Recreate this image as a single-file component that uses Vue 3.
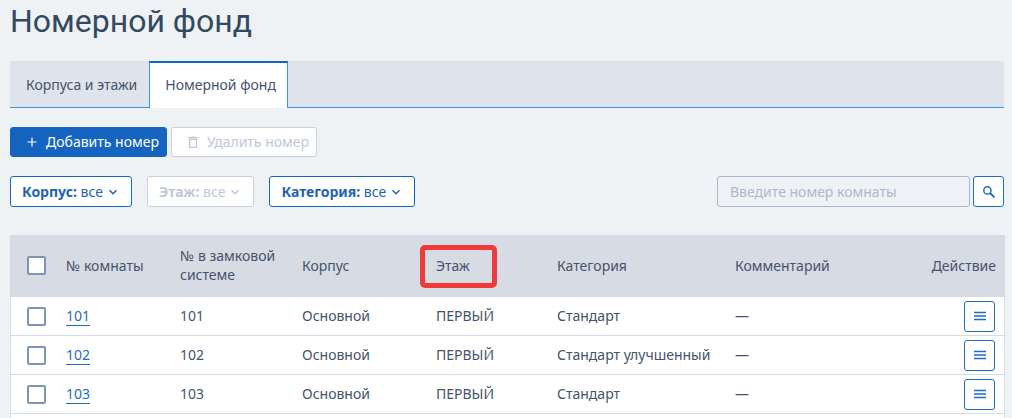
<script setup>
import { ref } from 'vue'

const filters = [
  { name: 'Корпус:', value: 'все', disabled: false },
  { name: 'Этаж:', value: 'все', disabled: true },
  { name: 'Категория:', value: 'все', disabled: false }
]
const rooms = ref([
  { number: '101', category: 'Стандарт', checked: false },
  { number: '102', category: 'Стандарт улучшенный', checked: false },
  { number: '103', category: 'Стандарт', checked: false }
])
const query = ref('')
</script>

<template>
  <main class="page">
    <h1>Номерной фонд</h1>

    <nav class="tabs">
      <a class="tab" href="#buildings">Корпуса и этажи</a>
      <a class="tab active" href="#rooms" aria-current="page">Номерной фонд</a>
    </nav>

    <div class="actions">
      <button class="btn primary" type="button">
        <svg width="12" height="12" viewBox="0 0 12 12" aria-hidden="true">
          <path d="M6 1.5v9M1.5 6h9" fill="none" stroke="currentColor" stroke-width="1.2" />
        </svg>
        Добавить номер
      </button>
      <button class="btn muted" type="button" disabled>
        <svg width="12" height="12" viewBox="0 0 12 12" aria-hidden="true">
          <path d="M1 1.7h10M4 1.2h4M2.6 3.4v7.9h6.8V3.4z" fill="none" stroke="currentColor" stroke-width="1.3" />
        </svg>
        Удалить номер
      </button>
    </div>

    <div class="filters">
      <button
        v-for="f in filters"
        :key="f.name"
        class="filter"
        type="button"
        :disabled="f.disabled"
      >
        <span><b>{{ f.name }}</b> {{ f.value }}</span>
        <svg width="10" height="10" viewBox="0 0 10 10" aria-hidden="true">
          <path d="M1.5 3.2L5 6.7l3.5-3.5" fill="none" stroke="currentColor" stroke-width="1.5" />
        </svg>
      </button>
      <form class="search" @submit.prevent>
        <input v-model="query" type="text" placeholder="Введите номер комнаты" aria-label="Номер комнаты" />
        <button class="square" type="submit" aria-label="Найти">
          <svg width="14" height="14" viewBox="0 0 14 14" aria-hidden="true">
            <circle cx="5.4" cy="5.4" r="3.6" fill="none" stroke="currentColor" stroke-width="1.5" />
            <path d="M8 8l4.4 4.4" fill="none" stroke="currentColor" stroke-width="1.9" />
          </svg>
        </button>
      </form>
    </div>

    <div class="card">
      <table>
        <colgroup>
          <col class="c-check" />
          <col class="c-room" />
          <col class="c-lock" />
          <col class="c-building" />
          <col class="c-floor" />
          <col class="c-category" />
          <col class="c-comment" />
          <col />
        </colgroup>
        <thead>
          <tr>
            <th class="check"><input type="checkbox" aria-label="Выбрать все" /></th>
            <th>№ комнаты</th>
            <th>№ в замковой системе</th>
            <th>Корпус</th>
            <th><span class="marked">Этаж</span></th>
            <th>Категория</th>
            <th>Комментарий</th>
            <th class="end">Действие</th>
          </tr>
        </thead>
        <tbody>
          <tr v-for="r in rooms" :key="r.number">
            <td class="check"><input v-model="r.checked" type="checkbox" :aria-label="'Выбрать ' + r.number" /></td>
            <td><a class="room" href="#room">{{ r.number }}</a></td>
            <td>{{ r.number }}</td>
            <td>Основной</td>
            <td>ПЕРВЫЙ</td>
            <td>{{ r.category }}</td>
            <td>—</td>
            <td class="end">
              <button class="square" type="button" aria-label="Действия">
                <svg width="12" height="10" viewBox="0 0 12 10" aria-hidden="true">
                  <path d="M0 1.5h12M0 5h12M0 8.5h12" fill="none" stroke="currentColor" stroke-width="1.3" />
                </svg>
              </button>
            </td>
          </tr>
        </tbody>
      </table>
    </div>
  </main>
</template>

<style>
html {
  background: #eef2f5;
}
body {
  margin: 0;
}
</style>

<style scoped>
.page,
.page * {
  box-sizing: border-box;
}
.page {
  display: flex;
  flex-direction: column;
  min-height: 100vh;
  padding: 0 7px 0 10px;
  background: #eef2f5;
  color: #45536b;
  font: 14px/20px "Noto Sans", "Open Sans", sans-serif;
}
h1 {
  margin: 0;
  height: 61px;
  color: #34495f;
  font: 400 32px/42px Roboto, "Noto Sans", sans-serif;
}
button,
input {
  margin: 0;
  font: inherit;
}
svg {
  display: block;
  flex: none;
}
.tabs {
  display: flex;
  height: 47px;
  margin-right: 1px;
  background: #dfe3ec;
  box-shadow: inset 0 -1px #3596e6;
}
.tab {
  padding: 14px 12px 0 16px;
  color: inherit;
  text-decoration: none;
}
.tab.active {
  padding: 12px 11px 0 15px;
  border: 1px solid #3596e6;
  border-top: 2px solid #1565c0;
  border-bottom: 0;
  background: #fff;
}
.actions {
  display: flex;
  gap: 4px;
  margin-top: 19px;
}
.btn {
  display: flex;
  align-items: center;
  gap: 8px;
  height: 30px;
  padding: 0 7px 0 15px;
  border: 1px solid #c9d0df;
  border-radius: 3px;
}
.primary {
  border-color: #1565c0;
  background: #1565c0;
  color: #fff;
}
.muted {
  background: #fff;
  color: #c0c8d8;
}
.filters {
  display: flex;
  gap: 15px;
  margin: 19px 1px 0 0;
}
.filter {
  display: flex;
  align-items: center;
  gap: 5px;
  height: 31px;
  padding: 0 13px 0 11px;
  border: 1px solid #1565c0;
  border-radius: 3px;
  background: #fff;
  color: #1c63b8;
}
.filter:disabled {
  border-color: #c9d0df;
  color: #c0c8d8;
}
.search {
  display: flex;
  gap: 3px;
  margin-left: auto;
}
.search input {
  width: 253px;
  height: 31px;
  padding: 0 12px;
  border: 1px solid #abb6ca;
  border-radius: 3px;
  background: transparent;
  color: inherit;
}
.search input::placeholder {
  color: #aeb8c6;
  opacity: 1;
}
.square {
  display: inline-flex;
  align-items: center;
  justify-content: center;
  width: 31px;
  height: 31px;
  padding: 0;
  border: 1px solid #1f6cc5;
  border-radius: 3px;
  background: #fff;
  color: #1f6cc5;
  vertical-align: middle;
}
.card {
  flex: 1;
  margin-top: 28px;
  background: #fff;
  box-shadow: inset 1px 0 #dde1e9, inset -1px 0 #dde1e9;
}
table {
  width: 100%;
  table-layout: fixed;
  border-collapse: separate;
  border-spacing: 0;
}
.c-check { width: 44px; }
.c-room { width: 114px; }
.c-lock { width: 122px; }
.c-building { width: 134px; }
.c-floor { width: 121px; }
.c-category { width: 178px; }
.c-comment { width: 180px; }
th {
  height: 62px;
  padding: 0 12px 2px;
  background: #d7dbe3;
  font-weight: 400;
  line-height: 19px;
  text-align: left;
}
td {
  height: 39px;
  padding: 0 12px;
  border-bottom: 1px solid #d7dbe6;
  line-height: 20px;
  white-space: nowrap;
}
.check {
  padding-left: 17px;
  padding-right: 0;
}
.end {
  padding-left: 0;
  padding-right: 9px;
  text-align: right;
}
td.end {
  padding-right: 10px;
  line-height: 0;
}
input[type="checkbox"] {
  display: block;
  width: 19px;
  height: 19px;
  appearance: none;
  border: 2px solid #7f95b8;
  border-radius: 2px;
  background: #fff;
}
input[type="checkbox"]:checked {
  background: #1565c0;
}
.room {
  display: inline-block;
  border-bottom: 1px solid #1f6cc5;
  color: #1f6cc5;
  line-height: 18px;
  text-decoration: none;
}
.marked {
  position: relative;
}
.marked::after {
  content: "";
  box-sizing: border-box;
  position: absolute;
  top: -11px;
  left: -16px;
  width: 77px;
  height: 43px;
  border: 5px solid #f03a3a;
  border-radius: 5px;
}
</style>
